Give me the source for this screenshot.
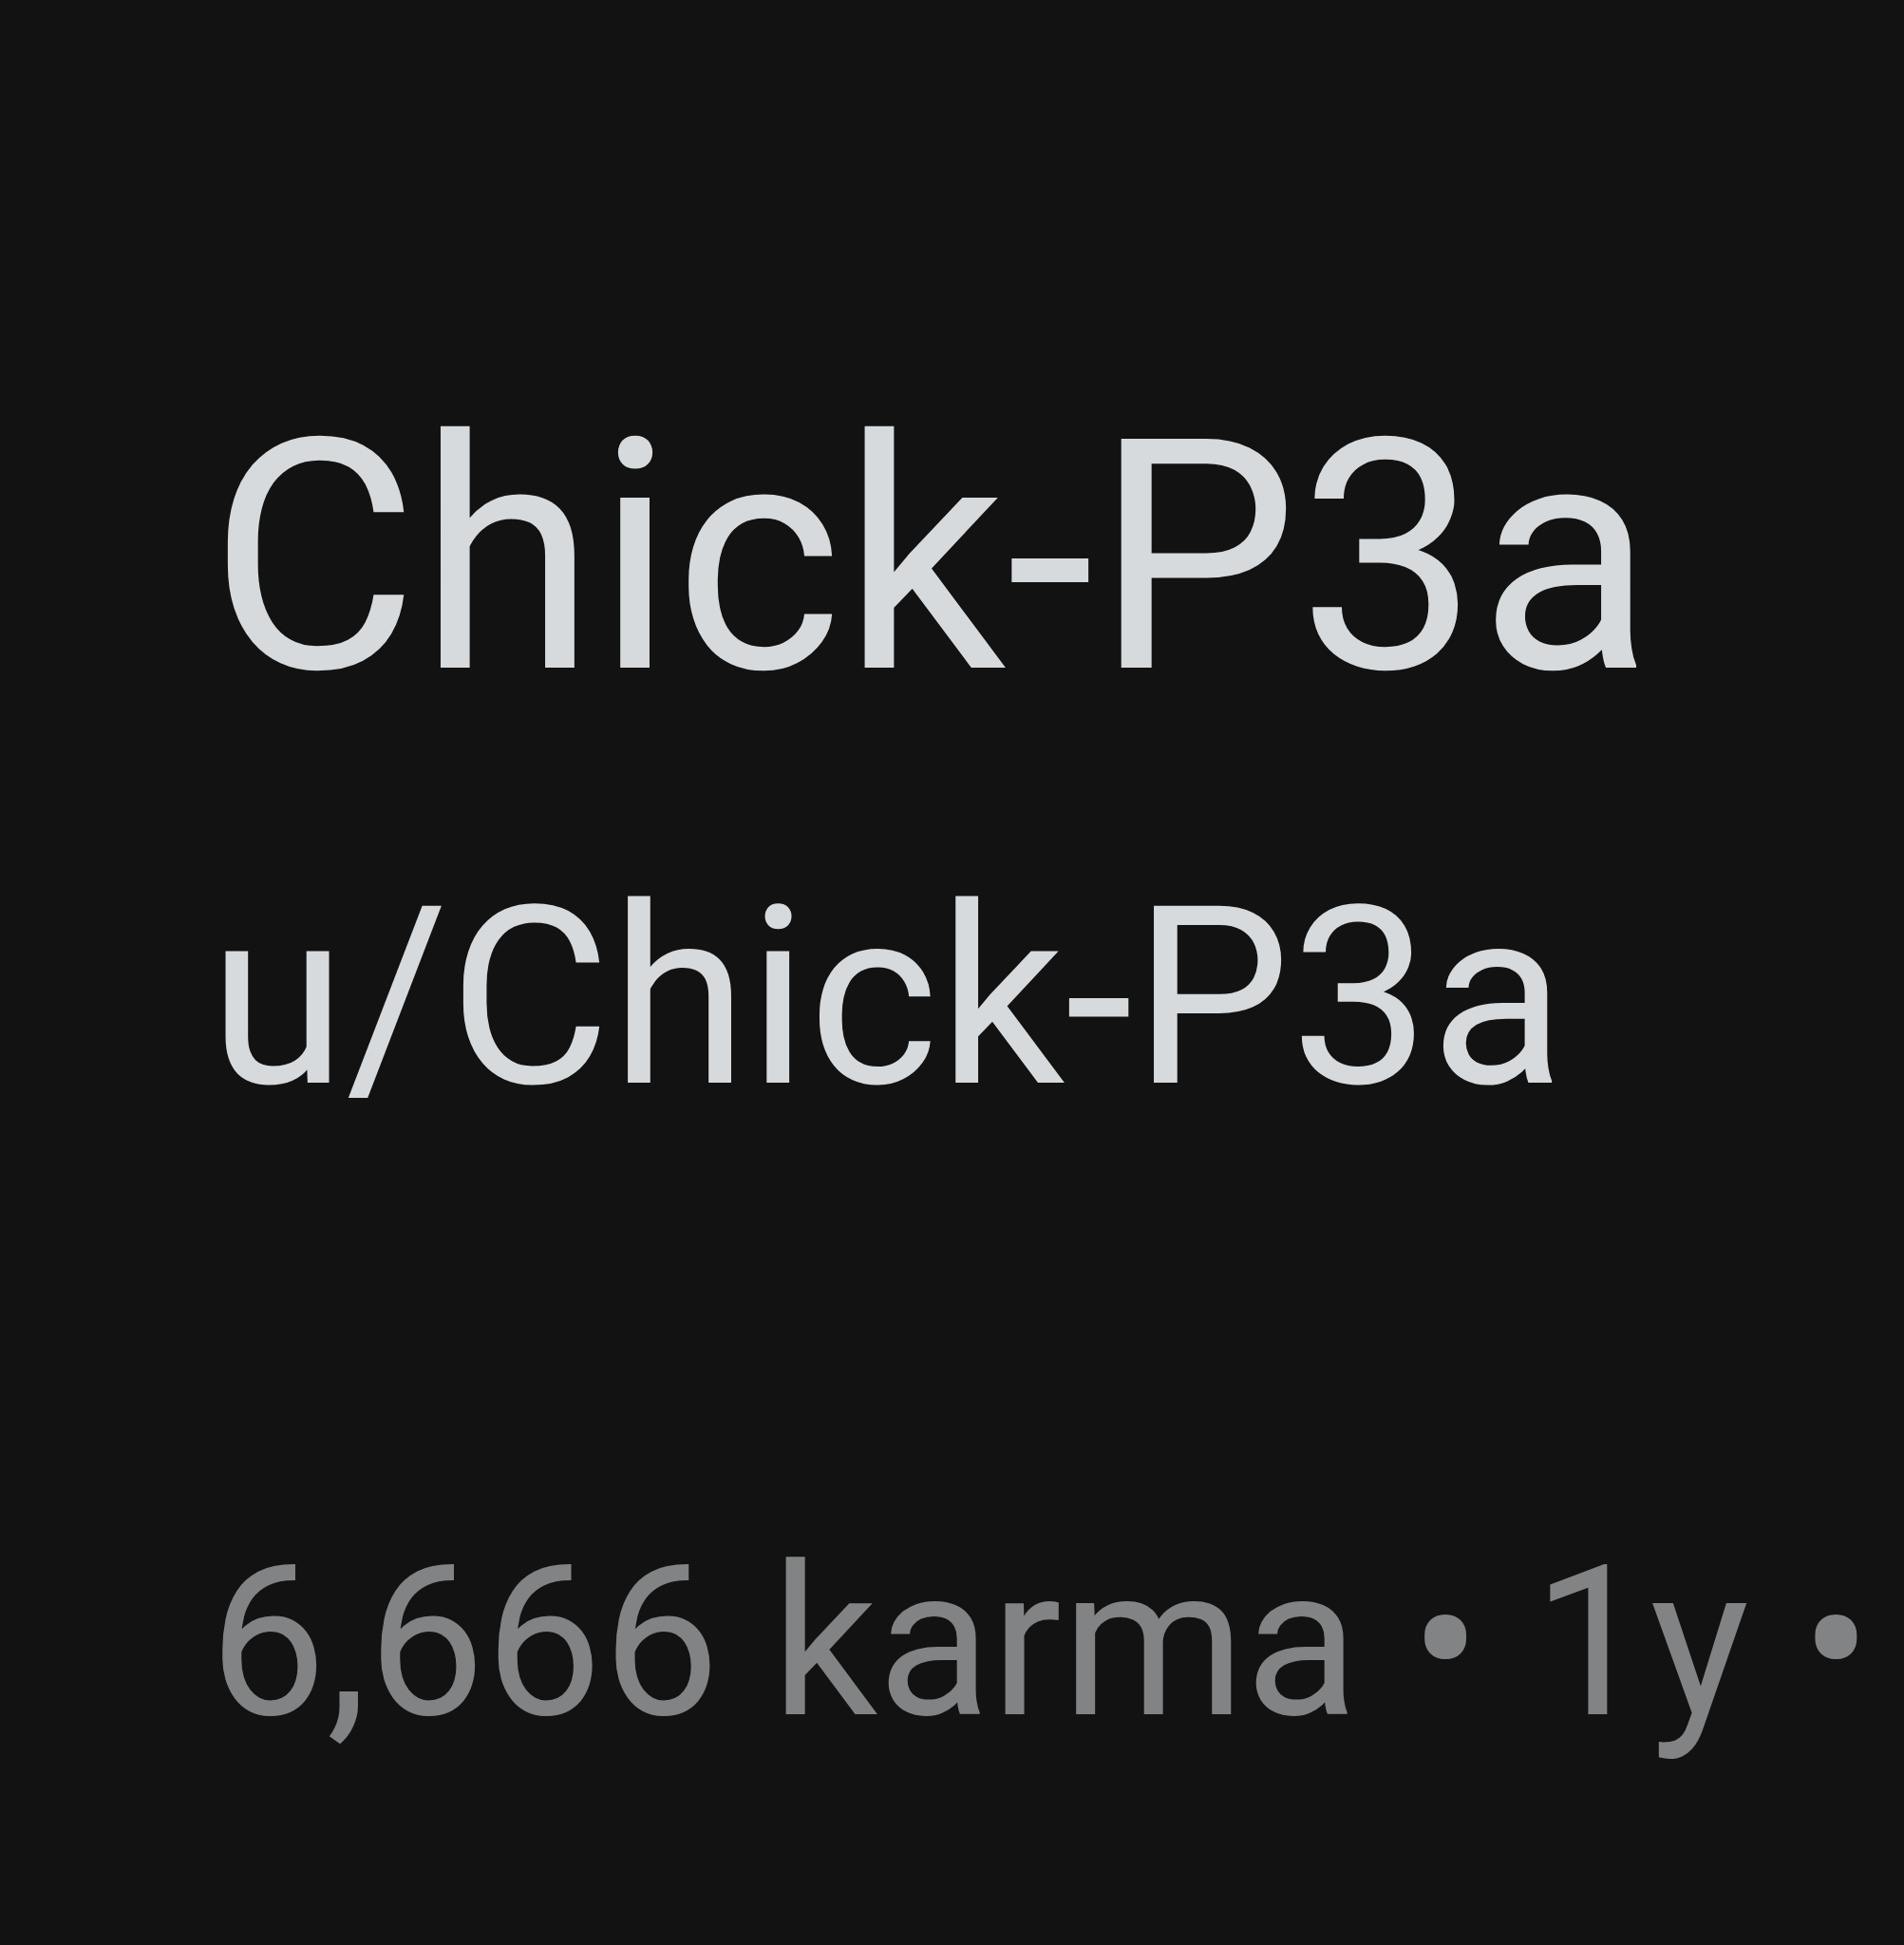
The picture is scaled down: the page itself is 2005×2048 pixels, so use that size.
export default function App() {
  return (
    <div className="min-h-screen w-full bg-[#121212] font-['Roboto',sans-serif]">
      <div className="pl-[220px] pt-[397px]">
        <h1 className="text-[339px] leading-[380px] font-normal text-[#d7dadc] whitespace-nowrap">
          Chick-P3a
        </h1>
        <p className="mt-[122px] text-[262px] leading-[304px] text-[#d7dadc] whitespace-nowrap">
          u/Chick-P3a
        </p>
        <p className="mt-[397px] text-[220px] leading-[260px] text-[#818384] whitespace-nowrap">
          6,666 karma • 1y •
        </p>
      </div>
    </div>
  )
}
